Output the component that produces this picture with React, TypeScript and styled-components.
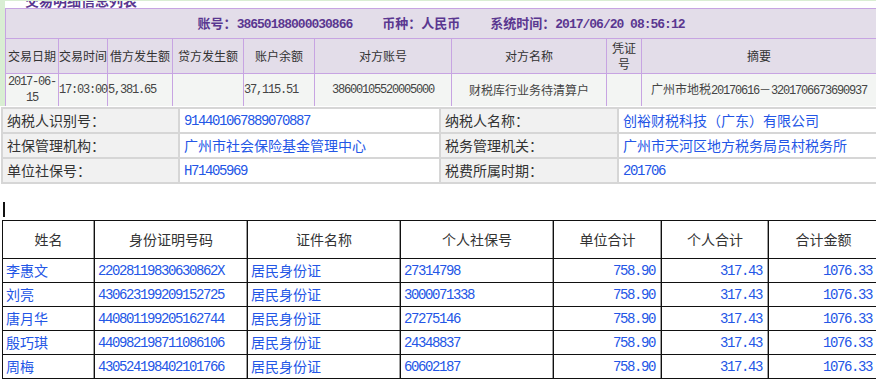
import styled, { createGlobalStyle } from "styled-components";

const GlobalStyle = createGlobalStyle`
    html, body {
        margin: 0;
        padding: 0;
        background: #fff;
    }
    body {
        font-family: "Noto Sans CJK SC", "Liberation Sans", sans-serif;
    }
`;

const Page = styled.div`
    width: 876px;
    height: 381px;
    overflow: hidden;
    background: #fff;
`;

const TopFrame = styled.div`
    height: 105px;
    overflow: hidden;
    border-left: 5px solid #d9eed3;
    border-top: 1px solid #d9eed3;
`;

const TitleClip = styled.div`
    height: 7px;
    overflow: hidden;
    padding-left: 20px;
`;

const Title = styled.div`
    margin-top: -9px;
    font-size: 14px;
    line-height: 16px;
    font-weight: bold;
    color: #5a3790;
`;

const DetailTable = styled.table`
    border-collapse: collapse;
    table-layout: fixed;
    width: 871px;
    font-size: 12px;
`;

const Row = styled.tr<{ $h: number }>`
    height: ${p => p.$h}px;
`;

const Cell = styled.td<{ $align?: string; $head?: boolean; $wrap?: boolean; $mono?: boolean }>`
    border: 1px solid #c7a4e2;
    padding: 0;
    text-align: ${p => p.$align || "center"};
    background: ${p => (p.$head ? "#e3dde9" : "#f3f5f3")};
    color: ${p => (p.$head ? "#333" : "#444")};
    font-family: ${p => (p.$mono ? `"Liberation Mono", monospace` : "inherit")};
    letter-spacing: ${p => (p.$mono ? "-0.1em" : "normal")};
    line-height: 16px;
    vertical-align: middle;
    white-space: ${p => (p.$wrap ? "normal" : "nowrap")};
    overflow: visible;
`;

const InfoBar = styled.td`
    border: 1px solid #c7a4e2;
    background: #e3dde9;
    padding: 0;
    text-align: center;
    color: #5a3790;
    font-weight: bold;
    font-size: 13px;
    line-height: 16px;
    white-space: nowrap;
`;

const InfoItem = styled.span`
    margin: 0 15px;
`;

const Num = styled.span`
    font-family: "Liberation Mono", monospace;
    letter-spacing: -0.1em;
`;

const BoldNum = styled.span`
    font-family: "Liberation Mono", monospace;
    letter-spacing: -1px;
`;

const InfoTable = styled.table`
    border-collapse: collapse;
    table-layout: fixed;
    width: 880px;
    margin: 1px 0 0 1px;
    font-size: 14px;
`;

const Label = styled.td`
    border: 2px solid #d6d6d6;
    background: #f1f1f1;
    color: #333;
    padding: 0 4px 1px;
    line-height: 18px;
    white-space: nowrap;
`;

const Value = styled.td`
    border: 2px solid #d6d6d6;
    background: #fff;
    color: #2356e6;
    padding: 0 4px 1px;
    line-height: 18px;
    white-space: nowrap;
`;

const Caret = styled.div`
    width: 2px;
    height: 15px;
    margin: 18px 0 3px 3px;
    background: #111;
`;

const StaffTable = styled.table`
    border-collapse: collapse;
    table-layout: fixed;
    width: 876px;
    margin-left: 2px;
    font-size: 14px;
`;

const HeadCell = styled.th`
    border: 1px solid #111;
    box-shadow: inset -1px 0 0 #a0a0a0;
    padding: 0 0 2px;
    font-weight: normal;
    color: #333;
    text-align: center;
`;

const BodyCell = styled.td<{ $right?: boolean }>`
    border: 1px solid #111;
    box-shadow: inset -1px 0 0 #a0a0a0;
    padding: 0 ${p => (p.$right ? "6px" : "3px")} 1px 3px;
    line-height: 18px;
    color: #2356e6;
    text-align: ${p => (p.$right ? "right" : "left")};
    white-space: nowrap;
    overflow: hidden;
`;

const staff = [
    { name: "李惠文", id: "22028119830630862X", no: "27314798" },
    { name: "刘亮", id: "430623199209152725", no: "3000071338" },
    { name: "唐月华", id: "440801199205162744", no: "27275146" },
    { name: "殷巧琪", id: "440982198711086106", no: "24348837" },
    { name: "周梅", id: "430524198402101766", no: "60602187" },
];

const detailCols = [53, 49, 65, 71, 71, 137, 155, 35, 235];
const infoCols = [177, 261, 178, 264];
const staffCols = [92, 153, 153, 153, 108, 107, 110];

export default function App() {
    return (
        <Page>
            <GlobalStyle />
            <TopFrame>
                <TitleClip>
                    <Title>交易明细信息列表</Title>
                </TitleClip>
                <DetailTable>
                    <colgroup>
                        {detailCols.map((w, i) => <col key={i} style={{ width: w }} />)}
                    </colgroup>
                    <tbody>
                        <Row $h={30}>
                            <InfoBar colSpan={9}>
                                <InfoItem>账号：<BoldNum>38650188000030866</BoldNum></InfoItem>
                                <InfoItem>币种：人民币</InfoItem>
                                <InfoItem>系统时间：<BoldNum>2017/06/20 08:56:12</BoldNum></InfoItem>
                            </InfoBar>
                        </Row>
                        <Row $h={35}>
                            <Cell $head>交易日期</Cell>
                            <Cell $head>交易时间</Cell>
                            <Cell $head>借方发生额</Cell>
                            <Cell $head>贷方发生额</Cell>
                            <Cell $head>账户余额</Cell>
                            <Cell $head>对方账号</Cell>
                            <Cell $head>对方名称</Cell>
                            <Cell $head $wrap>凭证号</Cell>
                            <Cell $head>摘要</Cell>
                        </Row>
                        <Row $h={30}>
                            <Cell $wrap $mono>2017-06-15</Cell>
                            <Cell $align="left" $mono>17:03:00</Cell>
                            <Cell $align="left" $mono>5,381.65</Cell>
                            <Cell></Cell>
                            <Cell $align="left" $mono>37,115.51</Cell>
                            <Cell $mono>38600105520005000</Cell>
                            <Cell>财税库行业务待清算户</Cell>
                            <Cell></Cell>
                            <Cell>
                                广州市地税<Num>20170616</Num>－<Num>3201706673690937</Num>
                            </Cell>
                        </Row>
                    </tbody>
                </DetailTable>
            </TopFrame>

            <InfoTable>
                <colgroup>
                    {infoCols.map((w, i) => <col key={i} style={{ width: w }} />)}
                </colgroup>
                <tbody>
                    <Row $h={25}>
                        <Label>纳税人识别号：</Label>
                        <Value><Num>914401067889070887</Num></Value>
                        <Label>纳税人名称：</Label>
                        <Value>创裕财税科技（广东）有限公司</Value>
                    </Row>
                    <Row $h={25}>
                        <Label>社保管理机构：</Label>
                        <Value>广州市社会保险基金管理中心</Value>
                        <Label>税务管理机关：</Label>
                        <Value>广州市天河区地方税务局员村税务所</Value>
                    </Row>
                    <Row $h={25}>
                        <Label>单位社保号：</Label>
                        <Value><Num>H71405969</Num></Value>
                        <Label>税费所属时期：</Label>
                        <Value><Num>201706</Num></Value>
                    </Row>
                </tbody>
            </InfoTable>

            <Caret />

            <StaffTable>
                <colgroup>
                    {staffCols.map((w, i) => <col key={i} style={{ width: w }} />)}
                </colgroup>
                <thead>
                    <Row $h={38}>
                        <HeadCell>姓名</HeadCell>
                        <HeadCell>身份证明号码</HeadCell>
                        <HeadCell>证件名称</HeadCell>
                        <HeadCell>个人社保号</HeadCell>
                        <HeadCell>单位合计</HeadCell>
                        <HeadCell>个人合计</HeadCell>
                        <HeadCell>合计金额</HeadCell>
                    </Row>
                </thead>
                <tbody>
                    {staff.map(s => (
                        <Row $h={24} key={s.id}>
                            <BodyCell>{s.name}</BodyCell>
                            <BodyCell><Num>{s.id}</Num></BodyCell>
                            <BodyCell>居民身份证</BodyCell>
                            <BodyCell><Num>{s.no}</Num></BodyCell>
                            <BodyCell $right><Num>758.90</Num></BodyCell>
                            <BodyCell $right><Num>317.43</Num></BodyCell>
                            <BodyCell $right><Num>1076.33</Num></BodyCell>
                        </Row>
                    ))}
                </tbody>
            </StaffTable>
        </Page>
    );
}
